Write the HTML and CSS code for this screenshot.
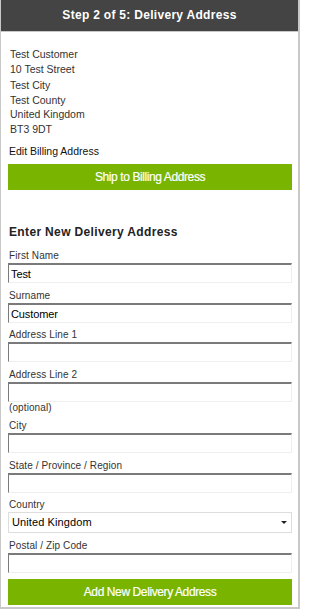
FILE: index.html
```html
<!DOCTYPE html>
<html>
<head>
<meta charset="utf-8">
<link rel="stylesheet" href="styles.css">
</head>
<body>
<div class="frame">
  <div class="header">Step 2 of 5: Delivery Address</div>
  <div class="content">
    <div class="address">
      <div class="line">Test Customer</div>
      <div class="line">10 Test Street</div>
      <div class="line gap">Test City</div>
      <div class="line">Test County</div>
      <div class="line">United Kingdom</div>
      <div class="line">BT3 9DT</div>
    </div>
    <div class="edit">Edit Billing Address</div>
    <div class="btn">Ship to Billing Address</div>
    <h2 class="title">Enter New Delivery Address</h2>
    <div class="field first">
      <div class="label">First Name</div>
      <div class="input">Test</div>
    </div>
    <div class="field">
      <div class="label">Surname</div>
      <div class="input">Customer</div>
    </div>
    <div class="field">
      <div class="label">Address Line 1</div>
      <div class="input"></div>
    </div>
    <div class="field">
      <div class="label">Address Line 2</div>
      <div class="input"></div>
      <div class="note">(optional)</div>
    </div>
    <div class="field">
      <div class="label">City</div>
      <div class="input"></div>
    </div>
    <div class="field">
      <div class="label">State / Province / Region</div>
      <div class="input"></div>
    </div>
    <div class="field">
      <div class="label">Country</div>
      <div class="select">United Kingdom<span class="arrow"></span></div>
    </div>
    <div class="field">
      <div class="label">Postal / Zip Code</div>
      <div class="input"></div>
    </div>
    <div class="btn btn-bottom">Add New Delivery Address</div>
  </div>
</div>
</body>
</html>
```
FILE: styles.css
```css
* { box-sizing: border-box; }
html, body { margin: 0; padding: 0; background: #fff; }
body { font-family: "Liberation Sans", Arial, sans-serif; }
.frame {
  width: 300px;
  height: 609px;
  border-left: 1px solid #c8c8c8;
  border-right: 2px solid #c8c8c8;
  border-bottom: 2px solid #c8c8c8;
  overflow: hidden;
}
.header {
  height: 32px;
  background: #444;
  border-bottom: 1px solid #c8c8c8;
  color: #fff;
  font-weight: bold;
  font-size: 12px;
  letter-spacing: 0.3px;
  text-align: center;
  line-height: 31px;
}
.content { padding: 15px 6px 0 7px; }
.address { padding-left: 2px; color: #333; font-size: 10.5px; }
.line { line-height: 14.6px; height: 14.6px; }
.line.gap { margin-top: 2px; }
.edit { margin-top: 7px; padding-left: 1px; font-size: 10.5px; color: #111; line-height: 14px; }
.btn {
  margin-top: 6px;
  height: 26px;
  background: #79b400;
  color: #fff;
  font-size: 12px;
  letter-spacing: -0.4px;
  text-align: center;
  line-height: 26px;
  -webkit-text-stroke: 0.2px #fff;
}
.title {
  margin: 34px 0 0 1px;
  font-size: 12px;
  font-weight: bold;
  letter-spacing: 0.35px;
  color: #222;
  line-height: 16px;
}
.field { margin-top: 6.5px; }
.field.first { margin-top: 10.5px; }
.label {
  font-size: 10px;
  color: #333;
  line-height: 12px;
  height: 12px;
  padding-left: 1px;
  margin-bottom: 1px;
  letter-spacing: 0.1px;
}
.input {
  height: 20px;
  border-top: 2px solid #7a7a7a;
  border-left: 1px solid #7a7a7a;
  border-right: 1px solid #efefef;
  border-bottom: 1px solid #efefef;
  font-size: 11px;
  letter-spacing: -0.1px;
  color: #000;
  padding-left: 2px;
  line-height: 18px;
}
.note { font-size: 10px; color: #333; line-height: 12px; margin-top: 0; padding-left: 1px; letter-spacing: 0.1px; }
.select {
  position: relative;
  height: 21px;
  border: 1px solid #ddd;
  font-size: 11px;
  color: #000;
  padding-left: 3px;
  line-height: 19px;
  letter-spacing: 0.1px;
}
.arrow {
  position: absolute;
  right: 4px;
  top: 8px;
  width: 0;
  height: 0;
  border-left: 3px solid transparent;
  border-right: 3px solid transparent;
  border-top: 3px solid #222;
}
.btn-bottom { margin-top: 6px; }
```
